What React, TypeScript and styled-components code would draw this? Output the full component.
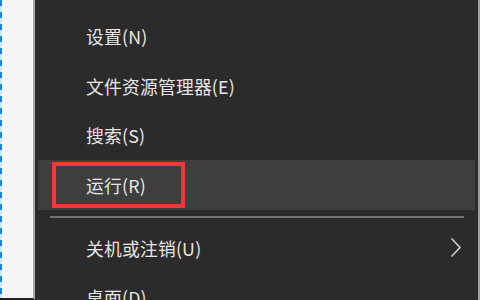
import React from 'react';
import styled, { createGlobalStyle } from 'styled-components';

const Global = createGlobalStyle`
  html, body {
    margin: 0;
    padding: 0;
    width: 480px;
    height: 300px;
    overflow: hidden;
    background: #2b2b2b;
  }
`;

const Screen = styled.div`
  display: flex;
  width: 480px;
  height: 300px;
  overflow: hidden;
`;

const SideStrip = styled.div`
  position: relative;
  width: 35px;
  flex-shrink: 0;
  background: #f5f5f7;
  border-right: 2px solid #a9a9a9;
  border-bottom: 2px solid #222;
  box-sizing: border-box;
`;

const DashedEdge = styled.div`
  position: absolute;
  left: 0;
  top: 0;
  bottom: 0;
  width: 2px;
  background: repeating-linear-gradient(
    to bottom,
    #1a86e0 0px,
    #1a86e0 6px,
    #cfe6f6 6px,
    #cfe6f6 12px
  );
`;

const Menu = styled.div`
  flex: 1;
  display: flex;
  flex-direction: column;
  padding: 11.5px 3px 0 3px;
  background: #2b2b2b;
  border-right: 2px solid #9e9e9e;
`;

const Item = styled.div<{ $active?: boolean }>`
  position: relative;
  display: flex;
  align-items: center;
  justify-content: space-between;
  flex-shrink: 0;
  height: 49.5px;
  padding: 0 13px 0 48px;
  background: ${(p) => (p.$active ? '#3e3e3e' : 'transparent')};
  color: #e6e6e6;
  font-family: 'Noto Sans CJK SC', 'Microsoft YaHei', sans-serif;
  font-size: 17.8px;
  letter-spacing: 0.2px;
`;

const Separator = styled.div`
  flex-shrink: 0;
  height: 2px;
  margin: 6px 11px 5.5px 12px;
  background: #6f6f6f;
`;

const Highlight = styled.div`
  position: absolute;
  left: 14px;
  top: 1.5px;
  width: 133px;
  height: 46px;
  border: 4px solid #f23a3a;
  box-sizing: border-box;
`;

const Chevron = () => (
  <svg width="12" height="21" viewBox="0 0 12 21">
    <polyline points="1.5,1.5 10,10.5 1.5,19.5" fill="none" stroke="#cfcfcf" strokeWidth="1.6" />
  </svg>
);

const items = ['设置(N)', '文件资源管理器(E)', '搜索(S)'];

export default function App() {
  return (
    <Screen>
      <Global />
      <SideStrip>
        <DashedEdge />
      </SideStrip>
      <Menu>
        {items.map((t) => (
          <Item key={t}>{t}</Item>
        ))}
        <Item $active>
          运行(R)
          <Highlight />
        </Item>
        <Separator />
        <Item>
          关机或注销(U)
          <Chevron />
        </Item>
        <Item>桌面(D)</Item>
      </Menu>
    </Screen>
  );
}
